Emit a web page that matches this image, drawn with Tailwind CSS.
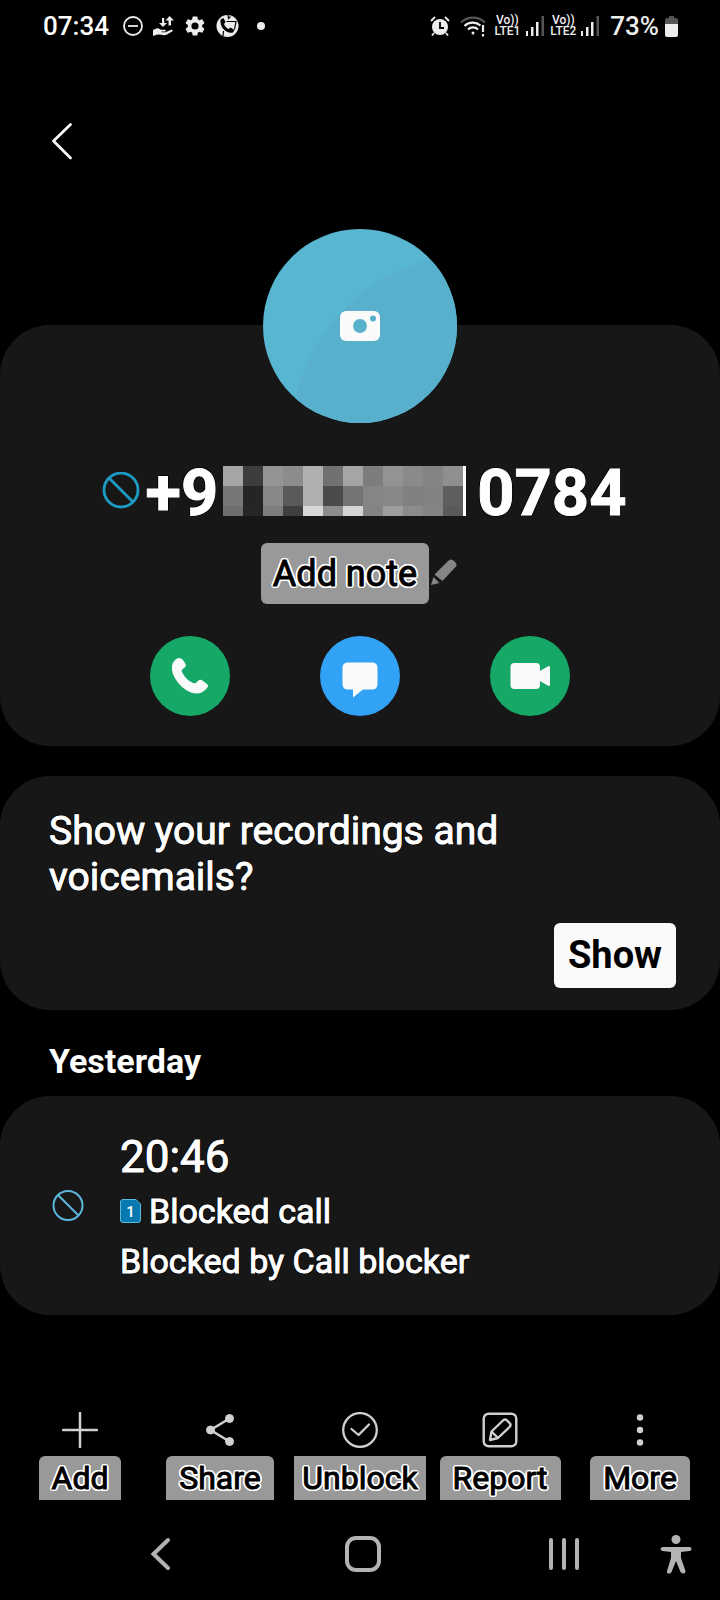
<!DOCTYPE html>
<html lang="en">
<head>
    <meta charset="UTF-8">
    <meta name="viewport" content="width=device-width, initial-scale=1.0">
    <title>Call details</title>
    <script src="https://cdn.jsdelivr.net/npm/@tailwindcss/browser@4"></script>
    <style>
        body { font-family: Roboto, "Liberation Sans", sans-serif; }
        /* high contrast text: thickened glyphs with an outline */
        .thick { -webkit-text-stroke: 1px currentColor; }
        .outline-dark { text-shadow: 1px 1px #000, -1px 1px #000, 1px -1px #000, -1px -1px #000; }
        .outline-light { text-shadow: 1px 1px #fff, -1px 1px #fff, 1px -1px #fff, -1px -1px #fff, 2px 0 #fff, -2px 0 #fff, 0 2px #fff, 0 -2px #fff, 2px 1px #fff, -2px 1px #fff, 2px -1px #fff, -2px -1px #fff, 1px 2px #fff, -1px 2px #fff, 1px -2px #fff, -1px -2px #fff; }
    </style>
</head>
<body class="min-h-screen flex flex-col bg-black text-white">

    <!-- Status bar -->
    <div class="h-[52px] pl-[43px] pr-[42px] flex items-center justify-between text-[#ededed]">
        <div class="flex items-center gap-[10px]">
            <span class="text-[26px] font-medium text-white mr-1">07:34</span>
            <svg class="size-5" viewBox="0 0 20 20" fill="none" stroke="currentColor" stroke-width="1.800"><circle cx="10" cy="10" r="9"/><path d="M5 10h10"/></svg>
            <svg class="w-[21px] h-5" viewBox="0 0 21 20" fill="currentColor"><path d="M9 2h2.200v5h2.800l-4 4-4-4h3zM16.500 0l4.500 4.500h-3v5h-2.500v-5h-3zM0 14l3.500-1.500c2-.5 3 .5 4.500 1.200h4c1 .3 1 1.500 0 1.800H8.500v.8h4l5.500-2.500c1.500-.5 2.300.5 1.500 1.500l-6 3.500c-3 1.200-6-.5-9-.2L0 20z"/></svg>
            <svg class="size-[22px]" viewBox="1 1 22 22" fill="currentColor"><path d="M19.140 12.940c.04-.3.06-.61.06-.94s-.02-.64-.07-.94l2.030-1.580a.49.49 0 0 0 .12-.61l-1.920-3.320a.49.49 0 0 0-.59-.22l-2.390.96a7 7 0 0 0-1.620-.94l-.36-2.540A.48.48 0 0 0 13.920 2.400h-3.840a.48.48 0 0 0-.48.410l-.36 2.540a7.400 7.400 0 0 0-1.620.94l-2.390-.96a.48.48 0 0 0-.59.22L2.720 8.870a.47.47 0 0 0 .12.610l2.030 1.580c-.05.3-.07.63-.07.940s.02.640.07.940l-2.030 1.580a.49.49 0 0 0-.12.610l1.920 3.320c.12.220.370.290.59.220l2.390-.96c.5.380 1.030.7 1.620.94l.36 2.540c.05.240.240.410.48.410h3.840c.24 0 .44-.17.470-.41l.36-2.540a7 7 0 0 0 1.620-.94l2.390.96c.220.080.470 0 .59-.22l1.920-3.320a.47.47 0 0 0-.12-.61zM12 15.600a3.600 3.600 0 1 1 0-7.200 3.600 3.600 0 0 1 0 7.200z"/></svg>
            <svg class="w-[23px] h-6" viewBox="0 0 23 24"><circle cx="11.500" cy="12" r="11" fill="#ededed"/><path d="M4.500 5.500l3-1.500 2 4-1.500 2c1 2.500 2.500 4 4.500 5l2-1.500 4 2.500-1.500 2.500C11 20 3.500 14 4.500 5.500z" fill="#000"/><path d="M10.500 7.500H20l-1.500 8M12 1l.5 3.500 2-2M7.500 17l-.5 5" fill="none" stroke="#000" stroke-width="1.200"/></svg>
            <span class="size-2 ml-2 rounded-full bg-[#ededed]"></span>
        </div>
        <div class="flex items-center">
            <svg class="w-5 h-5" viewBox="0 0 20 20"><circle cx="10" cy="11" r="8" fill="#ededed"/><path d="M1 5l4-4M19 5l-4-4M4 17l-2 2.500M16 17l2 2.500" stroke="#ededed" stroke-width="1.800"/><path d="M10 6v6h4" fill="none" stroke="#000" stroke-width="1.800"/></svg>
            <svg class="w-[26px] h-[22px] ml-[10px]" viewBox="0 0 26 22" fill="none" stroke="#ededed" stroke-width="2.200"><path d="M1 7.500a17 17 0 0 1 24 0" stroke="#555"/><path d="M4.500 11a12 12 0 0 1 16-.5M8 14.500a7 7 0 0 1 10 0"/><path d="M23 10v7M23 19v2.500"/><circle cx="13" cy="18" r="1.500" fill="#ededed" stroke="none"/></svg>
            <span class="ml-2 flex flex-col items-center text-[12px] leading-[11px] font-medium"><span>Vo))</span><span>LTE1</span></span>
            <svg class="w-[18px] h-5 ml-[6px]" viewBox="0 0 18 20" fill="#ededed"><rect y="15" width="2" height="5"/><rect x="5" y="11" width="2.500" height="9"/><rect x="10" y="6" width="2.500" height="14"/><rect x="15.500" width="2.500" height="20" fill="#555"/></svg>
            <span class="ml-[6px] flex flex-col items-center text-[12px] leading-[11px] font-medium"><span>Vo))</span><span>LTE2</span></span>
            <svg class="w-[18px] h-5 ml-[5px]" viewBox="0 0 18 20" fill="#ededed"><rect y="15" width="2" height="5"/><rect x="5" y="11" width="2.500" height="9"/><rect x="10" y="6" width="2.500" height="14"/><rect x="15.500" width="2.500" height="20" fill="#555"/></svg>
            <span class="ml-[11px] text-[26px] font-medium">73%</span>
            <svg class="w-[13px] h-[21px] ml-[6px]" viewBox="0 0 13 21"><path d="M4 0h5v2h2q2 0 2 2v5H0V4q0-2 2-2h2z" fill="#555"/><path d="M0 8h13v11q0 2-2 2H2q-2 0-2-2z" fill="#ededed"/></svg>
        </div>
    </div>

    <main class="flex flex-col">
        <header class="pt-[65px] pl-[46px]">
            <button type="button" aria-label="Back" class="block">
                <svg class="w-8 h-12" viewBox="0 0 32 48" fill="none" stroke="#fafafa" stroke-width="2.800" stroke-linecap="round" stroke-linejoin="round"><path d="M24.500 7.500L7.500 24L24.500 41"/></svg>
            </button>
        </header>

        <!-- Contact card -->
        <section class="mt-40 h-[421px] rounded-[50px] bg-[#171717] flex flex-col items-center">
            <button type="button" aria-label="Add photo" class="-mt-24 shrink-0 block">
                <svg class="size-[194px]" viewBox="0 0 194 194">
                    <defs><clipPath id="avatar"><circle cx="97" cy="97" r="97"/></clipPath></defs>
                    <g clip-path="url(#avatar)">
                        <rect width="194" height="194" fill="#58b6d0"/>
                        <circle cx="214" cy="212" r="187" fill="#58b0cd"/>
                    </g>
                    <rect x="77" y="82" width="40" height="30" rx="6" fill="#fafafa"/>
                    <circle cx="97" cy="97" r="7" fill="#58b0cd"/>
                    <circle cx="110" cy="89.500" r="3" fill="#58b0cd"/>
                </svg>
            </button>

            <h1 class="mt-8 pl-2 h-[72px] flex items-center text-[65px] leading-[72px] font-bold thick outline-dark">
                <svg class="size-[38px] mr-[6px]" viewBox="0 0 38 38" fill="none" stroke="#1c9bc4" stroke-width="2.800"><circle cx="19" cy="18" r="17"/><path d="M7 6l24 24"/></svg>
                <span class="pt-1">+9</span>
                <span class="ml-[5px] mr-[11px] flex">
                    <svg class="w-[243px] h-[50px]" viewBox="0 0 243 50" shape-rendering="crispEdges">
                        <g id="mosaic"></g>
                        <path d="M240 0h3v50h-3z" fill="#fff"/>
                    </svg>
                </span>
                <span class="pt-1">0784</span>
            </h1>

            <div class="mt-4 flex items-center gap-[2px]">
                <button type="button" class="h-[61px] px-3 rounded-md bg-[#999] text-black text-[36px] thick outline-light">Add note</button>
                <svg class="w-7 h-[30px]" viewBox="0 0 28 30" fill="#858585"><path d="M3.500 15.500L17 2q3-3 6 0l1.500 1.500q2 2.500 0 4.500L11.500 22zM2.500 18L8.500 24 0 26z"/></svg>
            </div>

            <div class="mt-8 flex gap-[90px]">
                <button type="button" aria-label="Call" class="size-20 rounded-full bg-[#15a866]">
                    <svg class="size-20" viewBox="0 0 80 80" fill="#fafafa"><path d="M25 24q4-4 8 0l2 3q2 3-1 5-3 2-2 4 4 8 11 11 2 1 4-1 3-4 6-1l4 3q2 2 0 4-8 10-21 2-9-6-13-16-3-9 2-14z"/></svg>
                </button>
                <button type="button" aria-label="Message" class="size-20 rounded-full bg-[#32a2f5]">
                    <svg class="size-20" viewBox="0 0 80 80" fill="#fafafa"><path d="M28 26.500h24q5.500 0 5.500 5.500v16q0 5.500-5.500 5.500h-9L33 61.500v-8h-5q-5.500 0-5.500-5.500V32q0-5.500 5.500-5.500z"/></svg>
                </button>
                <button type="button" aria-label="Video call" class="size-20 rounded-full bg-[#15a866]">
                    <svg class="size-20" viewBox="0 0 80 80" fill="#fafafa"><rect x="20.500" y="27" width="29.500" height="26" rx="4"/><path d="M50 35l8.500-5q1.500 0 1.500 1v18q0 1-1.500 1L50 45z"/></svg>
                </button>
            </div>
        </section>

        <!-- Recordings prompt -->
        <section class="mt-[30px] pt-8 pb-[22px] pl-[49px] pr-11 rounded-[50px] bg-[#171717] flex flex-col">
            <p class="max-w-[500px] text-[39px] leading-[46px] thick outline-dark">Show your recordings and voicemails?</p>
            <button type="button" class="mt-[23px] self-end h-[65px] px-[14px] rounded-md bg-[#fafafa] text-black text-[38px] font-bold">Show</button>
        </section>

        <!-- Call log -->
        <h2 class="h-[86px] pt-4 pl-[49px] flex items-center text-[34px] font-bold">Yesterday</h2>
        <section class="h-[219px] pl-[52px] rounded-[50px] bg-[#171717] flex items-center gap-9">
            <svg class="size-8 shrink-0" viewBox="0 0 32 32" fill="none" stroke="#5cb9dd" stroke-width="2"><circle cx="16" cy="15.500" r="14.500"/><path d="M6 5l20 20"/></svg>
            <div class="pt-[2px] thick outline-dark">
                <p class="text-[44px] leading-[58px]">20:46</p>
                <p class="flex items-center gap-2 text-[34px] leading-[50px]">
                    <svg class="w-[21px] h-6 [text-shadow:none]" viewBox="0 0 21 24"><path d="M3 .5h13l4.500 4.500v16q0 2.500-2.500 2.500H3Q.5 23.500.5 21V3Q.5.500 3 .5z" fill="#0878b0" stroke="#5cb9dd"/><text x="10.500" y="17.500" text-anchor="middle" font-size="15" font-weight="500" fill="#fff" class="[-webkit-text-stroke:0]">1</text></svg>
                    Blocked call
                </p>
                <p class="text-[34px] leading-[50px]">Blocked by Call blocker</p>
            </div>
        </section>
    </main>

    <footer class="mt-auto">
        <!-- Actions -->
        <div class="px-[10px] grid grid-cols-5 text-black text-[32px] leading-[44px]">
            <button type="button" class="flex flex-col items-center gap-2">
                <svg class="size-9" viewBox="0 0 36 36" stroke="#d0d0d0" stroke-width="2.500" stroke-linecap="round"><path d="M18 1v34M1 18h34"/></svg>
                <span class="px-[13px] rounded-t-md bg-[#999] thick outline-light">Add</span>
            </button>
            <button type="button" class="flex flex-col items-center gap-2">
                <svg class="size-9" viewBox="0 0 36 36" fill="#d0d0d0" stroke="#d0d0d0"><path d="M27.500 6.500L8.500 18l19 11.500" fill="none" stroke-width="2.500"/><circle cx="27.500" cy="6.500" r="4"/><circle cx="8.500" cy="18" r="4"/><circle cx="27.500" cy="29.500" r="4"/></svg>
                <span class="px-[13px] rounded-t-md bg-[#999] thick outline-light">Share</span>
            </button>
            <button type="button" class="flex flex-col items-center gap-2">
                <svg class="size-9" viewBox="0 0 36 36" fill="none" stroke="#d0d0d0" stroke-width="2.300" stroke-linecap="round" stroke-linejoin="round"><circle cx="18" cy="18" r="16.800"/><path d="M9.500 17l7 6L27 12.500"/></svg>
                <span class="px-2 bg-[#999] thick outline-light">Unblock</span>
            </button>
            <button type="button" class="flex flex-col items-center gap-2">
                <svg class="size-9" viewBox="0 0 36 36" fill="none" stroke="#d0d0d0" stroke-width="2.400" stroke-linejoin="round"><rect x="1.700" y="1.700" width="32.600" height="32.600" rx="5"/><path d="M8 28l1.500-8.500L21.500 8q1.500-1 3 0l3.500 3.500q1 1.500 0 3L16 26zM10 20l6 6"/></svg>
                <span class="px-[13px] rounded-t-md bg-[#999] thick outline-light">Report</span>
            </button>
            <button type="button" class="flex flex-col items-center gap-2">
                <svg class="size-9" viewBox="0 0 36 36" fill="#d0d0d0"><circle cx="18" cy="5.500" r="3.200"/><circle cx="18" cy="18" r="3.200"/><circle cx="18" cy="30.500" r="3.200"/></svg>
                <span class="px-[13px] rounded-t-md bg-[#999] thick outline-light">More</span>
            </button>
        </div>

        <!-- System navigation -->
        <nav class="h-[100px] pt-2 pl-[138px] pr-7 flex items-center justify-between">
            <button type="button" aria-label="Back"><svg class="size-10" viewBox="0 0 40 40" fill="none" stroke="#b3b3b3" stroke-width="4" stroke-linecap="round"><path d="M30 6L15.500 20L30 34"/></svg></button>
            <button type="button" aria-label="Home"><svg class="size-9" viewBox="0 0 36 36" fill="none" stroke="#b3b3b3" stroke-width="4"><rect x="2" y="2" width="32" height="32" rx="9"/></svg></button>
            <div class="flex items-center gap-20">
                <button type="button" aria-label="Recents"><svg class="w-8 h-9" viewBox="0 0 32 36" stroke="#b3b3b3" stroke-width="4" stroke-linecap="round"><path d="M3 4v28M16 4v28M29 4v28"/></svg></button>
                <button type="button" aria-label="Accessibility"><svg class="w-8 h-10" viewBox="0 0 32 40" fill="#b3b3b3"><circle cx="16" cy="5.500" r="4.500"/><path d="M2.500 13h27q2 0 2 2t-2 2L21 18v6l4.500 13q0 3-3 2.500L20.500 38 16 27l-4.500 11-1.500 1.500q-3.500.5-3-2.500L11 24v-6l-8.500-1q-2-.5-2-2t2-2z"/></svg></button>
            </div>
        </nav>
    </footer>

    <script>
        // pixelated middle digits, 3 rows x 12 columns of grey levels
        const rows = [
            [165, 61, 148, 140, 176, 113, 165, 125, 147, 138, 132, 143],
            [119, 37, 136, 90, 176, 74, 116, 133, 136, 128, 130, 94],
            [110, 38, 125, 63, 216, 140, 213, 132, 158, 140, 132, 90]
        ];
        const mosaic = document.getElementById('mosaic');
        rows.forEach((row, y) => {
            row.forEach((level, x) => {
                const cell = document.createElementNS('http://www.w3.org/2000/svg', 'rect');
                cell.setAttribute('x', x * 20);
                cell.setAttribute('y', y * 20);
                cell.setAttribute('width', 20);
                cell.setAttribute('height', y === 2 ? 10 : 20);
                cell.setAttribute('fill', `rgb(${level}, ${level}, ${level})`);
                mosaic.appendChild(cell);
            });
        });
    </script>
</body>
</html>
